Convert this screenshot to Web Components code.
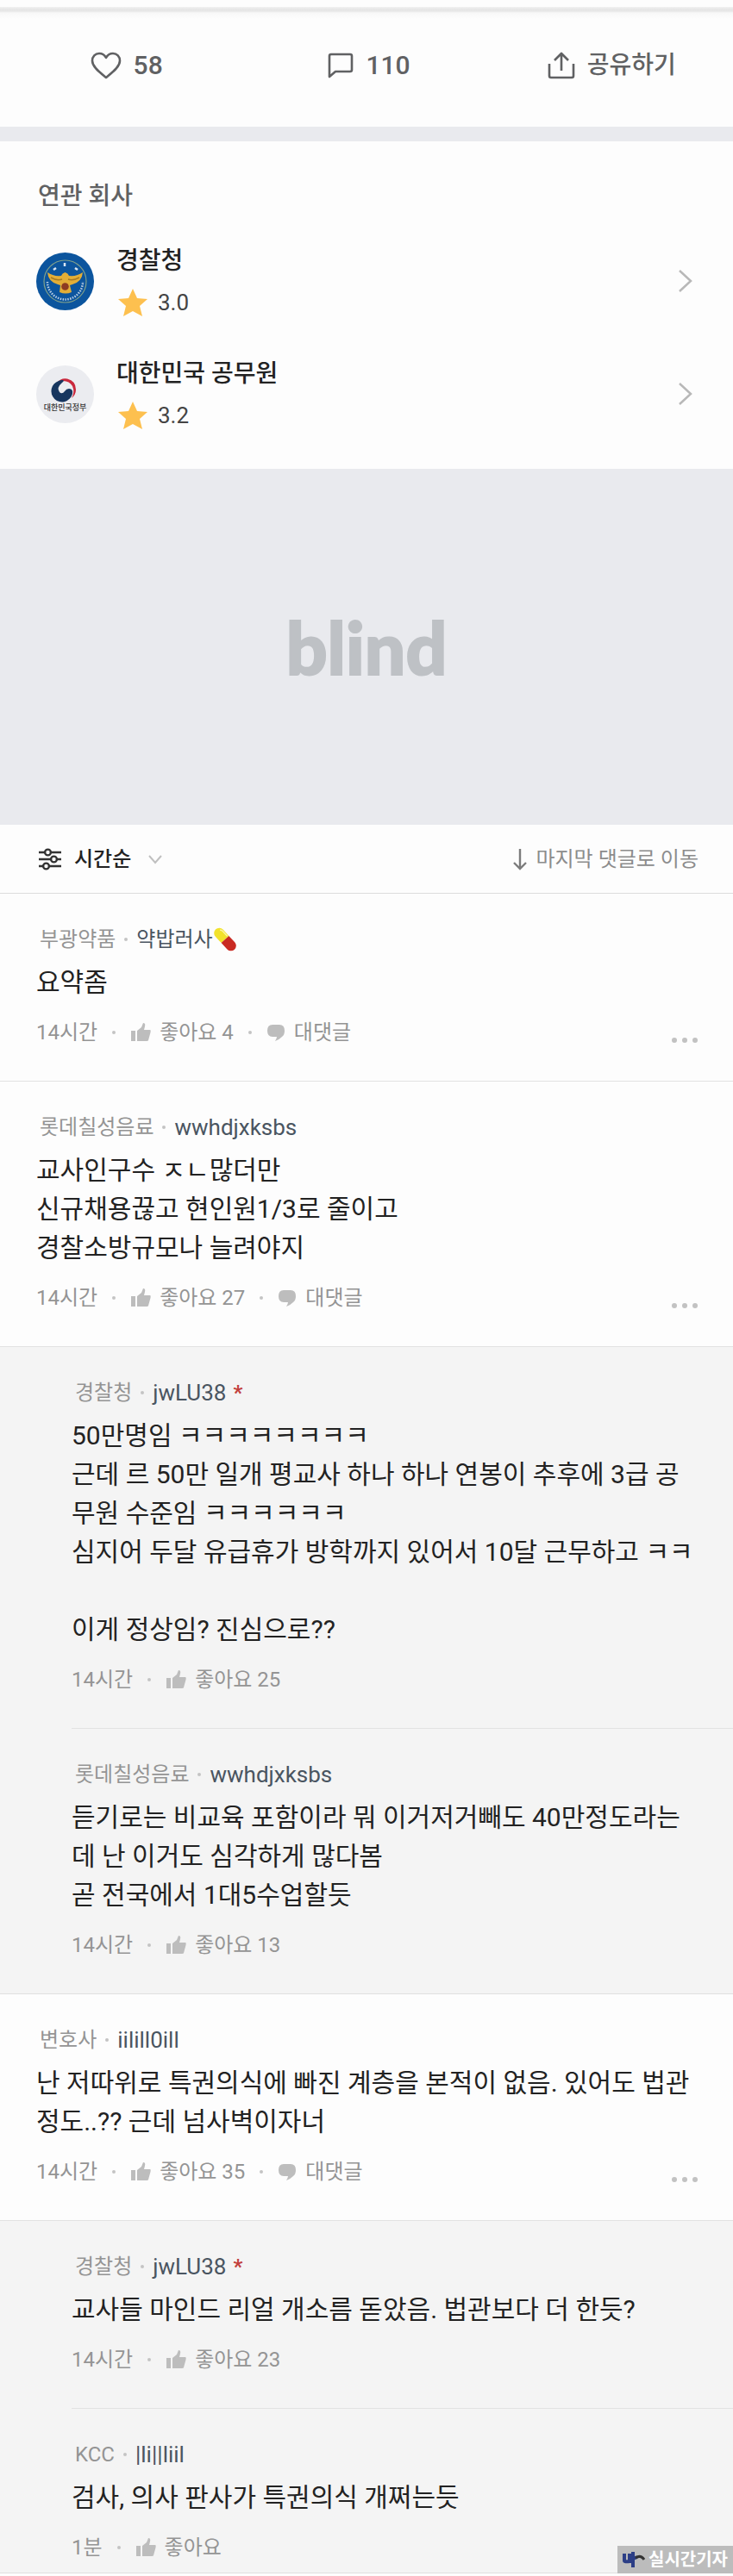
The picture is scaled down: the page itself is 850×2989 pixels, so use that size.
<!DOCTYPE html>
<html lang="ko">
<head>
<meta charset="utf-8">
<meta name="viewport" content="width=device-width, initial-scale=1">
<title>블라인드</title>
<style>
  html { background: #fdfdfd; }
  body { margin: 0; font-family: Roboto, "Noto Sans CJK KR", sans-serif; color: #222; }
</style>
</head>
<body>
<post-page>
  <post-actions>
    <action-button icon="heart" count>58</action-button>
    <action-button icon="comment" count>110</action-button>
    <action-button icon="share">공유하기</action-button>
  </post-actions>
  <related-companies>
    <company-row logo="police" score="3.0">경찰청</company-row>
    <company-row logo="gov" score="3.2">대한민국 공무원</company-row>
  </related-companies>
  <ad-banner>blind</ad-banner>
  <comment-toolbar></comment-toolbar>
  <main>
    <user-comment company="부광약품" name="약밥러사" pill time="14시간" likes="4">요약좀</user-comment>
    <user-comment company="롯데칠성음료" name="wwhdjxksbs" latin time="14시간" likes="27">교사인구수 ㅈㄴ많더만<br>신규채용끊고 현인원1/3로 줄이고<br>경찰소방규모나 늘려야지</user-comment>
    <reply-group>
      <user-comment reply company="경찰청" name="jwLU38" latin writer time="14시간" likes="25">50만명임 ㅋㅋㅋㅋㅋㅋㅋㅋ<br>근데 르 50만 일개 평교사 하나 하나 연봉이 추후에 3급 공무원 수준임 ㅋㅋㅋㅋㅋㅋ<br>심지어 두달 유급휴가 방학까지 있어서 10달 근무하고 ㅋㅋ<br><br>이게 정상임? 진심으로??</user-comment>
      <user-comment reply company="롯데칠성음료" name="wwhdjxksbs" latin time="14시간" likes="13">듣기로는 비교육 포함이라 뭐 이거저거빼도 40만정도라는데 난 이거도 심각하게 많다봄<br>곧 전국에서 1대5수업할듯</user-comment>
    </reply-group>
    <user-comment company="변호사" name="iilill0ill" latin time="14시간" likes="35">난 저따위로 특권의식에 빠진 계층을 본적이 없음. 있어도 법관정도..?? 근데 넘사벽이자너</user-comment>
    <reply-group>
      <user-comment reply company="경찰청" name="jwLU38" latin writer time="14시간" likes="23">교사들 마인드 리얼 개소름 돋았음. 법관보다 더 한듯?</user-comment>
      <user-comment reply last company="KCC" name="|li||liil" latin time="1분">검사, 의사 판사가 특권의식 개쩌는듯</user-comment>
    </reply-group>
  </main>
  <source-mark slot="mark">실시간기자</source-mark>
</post-page>

<script>
const define = (name, render) => customElements.define(name, class extends HTMLElement {
  connectedCallback() {
    if (this.shadowRoot) return;
    this.attachShadow({ mode: 'open' }).innerHTML = render(this);
  }
});

const RESET = `
  button, a { font: inherit; color: inherit; background: none; border: 0; padding: 0; margin: 0; text-decoration: none; cursor: pointer; }
  svg { display: block; flex: none; }`;

const ICONS = {
  heart: `<svg width="36" height="32" viewBox="0 0 36 32" fill="none" stroke="#606163" stroke-width="2.6" stroke-linejoin="round"><path d="M18 30C12 25 2 18 2 10.500C2 5.500 5.500 2 10 2c3.500 0 6.500 2 8 5c1.500-3 4.500-5 8-5c4.500 0 8 3.500 8 8.500C34 18 24 25 18 30Z"/></svg>`,
  comment: `<svg width="30" height="30" viewBox="0 0 30 30" fill="none" stroke="#606163" stroke-width="2.600" stroke-linejoin="round"><path d="M2 28V4Q2 2 4 2H26Q28 2 28 4V20Q28 22 26 22H9Z"/></svg>`,
  share: `<svg width="32" height="32" viewBox="0 0 32 32" fill="none" stroke="#606163" stroke-width="2.600" stroke-linejoin="round"><path d="M2 14V28Q2 30 4 30H28Q30 30 30 28V14M16 22V3M8 10L16 2L24 10"/></svg>`
};

const LOGOS = {
  police: `<svg width="67" height="67" viewBox="0 0 67 67" role="img" aria-label="경찰청 로고">
    <circle cx="33.500" cy="33.500" r="33.500" fill="#0c559e"/>
    <circle cx="33.500" cy="33.500" r="24.500" fill="none" stroke="#7fa08c" stroke-width="1.200"/>
    <path d="M13 34A20.500 20.500 0 0 0 54 34" fill="none" stroke="#b9cee4" stroke-width="2.500" stroke-dasharray="1.500 1.400"/>
    <path d="M20 20l3-2M33 12v4M45 18l3 2" stroke="#dbe7f3" stroke-width="2.500" fill="none"/>
    <path d="M13 23Q20 28 29 27Q30 24 33.500 23Q37 24 38 27Q47 28 54 23Q53 34 42 37L39 38L41 46Q34 49 27 46L28 38L25 37Q14 34 13 23Z" fill="#e3ae37"/>
    <path d="M17 29Q24 33 30 31M50 29Q43 33 37 31" stroke="#a77b24" stroke-width="1.500" fill="none"/>
    <circle cx="33.500" cy="39.500" r="4.300" fill="#8d3b22"/></svg>`,
  gov: `<svg width="67" height="67" viewBox="0 0 67 67" role="img" aria-label="대한민국정부 로고">
    <circle cx="33.500" cy="33.500" r="33.500" fill="#ebecf0"/>
    <path d="M24 20Q29 14 36 15.500Q46 18 46 28Q46 34 41 38Q45 31 42 24Q38 17 29 18Q26 18.500 24 20Z" fill="#c9283c"/>
    <path d="M26 18A12.500 12.500 0 1 0 42 33Q43 27 38 27Q35 27 33 30Q30 34 27 31Q23 26 30 20Q33 18 31 17Q29 16.500 26 18Z" fill="#17365f"/>
    <text x="33.500" y="52" text-anchor="middle" font-family="Noto Sans CJK KR, sans-serif" font-size="9" font-weight="500" fill="#333">대한민국정부</text></svg>`
};

define('post-page', () => `
  <style>:host { display: block; position: relative; overflow: hidden; background: #fdfdfd; }</style>
  <slot></slot><slot name="mark"></slot>`);

define('post-actions', () => `
  <style>
    :host { display: block; border-bottom: 17px solid #e9eaee; }
    .shade { height: 14px; margin-top: 8px; background: linear-gradient(#f2f2f2, #e5e5e5 3px, #e8e8e8 5px, #f8f8f8 7px, #fdfdfd); }
    .row { display: grid; grid-template-columns: repeat(3, 1fr); align-items: center; height: 125px; padding: 0 0 17px 6px; box-sizing: border-box; }
  </style>
  <div class="shade"></div>
  <div class="row"><slot></slot></div>`);

define('action-button', el => `
  <style>${RESET}
    :host { display: flex; justify-content: center; }
    button { display: flex; align-items: center; gap: 14px; font-size: 28px; line-height: 40px; font-weight: 500; color: #606163; }
    :host([count]) button { font-size: 30px; }
  </style>
  <button type="button">${ICONS[el.getAttribute('icon')]}<slot></slot></button>`);

define('related-companies', () => `
  <style>
    :host { display: block; padding: 44px 44px 0; }
    h2 { margin: 0 0 17px; font-size: 28px; line-height: 40px; font-weight: 500; color: #606163; }
    .list { padding-bottom: 17px; }
  </style>
  <h2>연관 회사</h2><div class="list"><slot></slot></div>`);

define('company-row', el => `
  <style>${RESET}
    :host { display: block; margin-left: -2px; height: 131px; }
    a { display: flex; gap: 26px; align-items: center; height: 122px; padding-right: 2px; }
    .info { flex: 1; padding-top: 2px; }
    .name { font-size: 28px; line-height: 40px; font-weight: 500; color: #222; }
    .score { display: flex; align-items: center; gap: 12px; margin-top: 8px; font-size: 26px; line-height: 40px; color: #444; }
  </style>
  <a href="#company">${LOGOS[el.getAttribute('logo')]}
    <div class="info">
      <div class="name"><slot></slot></div>
      <div class="score"><svg width="36" height="34" viewBox="0 0 36 34"><path d="M19 1L24 12L36 13L27 21L30 33L19 27L8 33L11 21L2 13L14 12Z" fill="#fdc04f"/></svg>${el.getAttribute('score')}</div>
    </div>
    <svg width="18" height="28" viewBox="0 0 18 28" fill="none" stroke="#b8b8b8" stroke-width="2.500"><path d="M2 2L15 14L2 26"/></svg>
  </a>`);

define('ad-banner', () => `
  <style>
    :host { display: flex; align-items: center; justify-content: center; height: 413px; background: #e9eaee; color: #bec1c5;
      font-family: Lato, sans-serif; font-weight: 900; font-size: 84px; line-height: 100px; -webkit-text-stroke: 2px #bec1c5; }
  </style><slot></slot>`);

define('comment-toolbar', () => `
  <style>${RESET}
    :host { display: flex; justify-content: space-between; align-items: center; height: 79px; padding: 0 40px 0 44px; border-bottom: 1px solid #dcdcdc; font-size: 24px; line-height: 36px; }
    button, a { display: flex; align-items: center; }
    button { gap: 14px; font-weight: 500; color: #222; }
    a { gap: 9px; color: #8c8c8c; }
    .down { margin-left: 6px; }
  </style>
  <button type="button">
    <svg width="28" height="26" viewBox="0 0 28 26" fill="none" stroke="#333" stroke-width="2.400"><path d="M1 5H8M15 5H27M1 13H15M22 13H27M1 21H6M13 21H27"/><circle cx="11.500" cy="5" r="3.400"/><circle cx="18.500" cy="13" r="3.400"/><circle cx="9.500" cy="21" r="3.400"/></svg>
    시간순
    <svg class="down" width="16" height="12" viewBox="0 0 16 12" fill="none" stroke="#c0c0c0" stroke-width="2"><path d="M1 2L8 10L15 2"/></svg>
  </button>
  <a href="#last">
    <svg width="18" height="26" viewBox="0 0 18 26" fill="none" stroke="#7c7c7c" stroke-width="2.400"><path d="M9 1V24M2 17L9 24L16 17"/></svg>
    마지막 댓글로 이동
  </a>`);

define('reply-group', () => `
  <style>:host { display: block; background: #f4f4f4; padding-left: 83px; border-bottom: 1px solid #dfdfdf; }</style>
  <slot></slot>`);

define('user-comment', el => {
  const a = n => el.getAttribute(n), has = n => el.hasAttribute(n);
  return `
  <style>${RESET}
    :host { display: block; padding: 36px 40px 39px 42px; border-bottom: 1px solid #e2e2e2; }
    :host([reply]) { padding-left: 0; }
    :host([reply]:last-of-type) { border-bottom: 0; }
    :host([last]) { padding-bottom: 12px; }
    .author { display: flex; align-items: center; height: 34px; padding-left: 4px; font-size: 24px; line-height: 34px; color: #949494; }
    .author a { color: #4a5561; }
    :host([latin]) .author a { font-size: 26px; }
    .author b { margin-left: 8px; font-weight: 700; color: #c2403c; }
    .body { margin: 10px 0 19px; font-size: 30px; line-height: 45px; color: #222; word-break: break-all; }
    .meta { display: flex; align-items: center; height: 34px; font-size: 24px; line-height: 34px; color: #949494; }
    .meta button { display: flex; align-items: center; gap: 10px; }
    .meta .re { gap: 8px; }
    i { width: 4px; height: 4px; border-radius: 2px; background: #c4c4c4; }
    .author i { margin: 0 10px; }
    .meta i { margin: 0 17px; }
    .meta .more { margin-left: auto; padding-top: 18px; }
  </style>
  <div class="author">${a('company')}<i></i><a href="#user">${a('name')}</a>${has('writer') ? '<b>*</b>' : ''}${has('pill') ? `
    <svg width="28" height="28" viewBox="0 0 28 28" role="img" aria-label="알약"><g transform="rotate(47 14 14)"><path d="M14 8H4A6 6 0 0 0 4 20H14Z" fill="#f2e22c"/><path d="M14 8H24A6 6 0 0 1 24 20H14Z" fill="#c92a22"/><path d="M2 11Q3 9.500 5 9.500H13" stroke="#fbf6a0" stroke-width="1.500" fill="none"/></g></svg>` : ''}</div>
  <div class="body"><slot></slot></div>
  <div class="meta">${a('time')}<i></i>
    <button type="button"><svg width="24" height="24" viewBox="0 0 24 24" fill="#bdbdbd"><path d="M1 10H6V22H1ZM8 10L13 6L15 1Q18 1 17 5L16 9H23Q24 9 23.500 12L21 21Q21 22 19 22H8Z"/></svg>좋아요${has('likes') ? ' ' + a('likes') : ''}</button>
    ${has('reply') ? '' : `<i></i><button type="button" class="re"><svg width="24" height="24" viewBox="0 0 24 24" fill="#bdbdbd"><path d="M7 3H15Q21 3 21 10Q21 15 18 17Q14 21 10 22Q12 19 12 17H7Q1 17 1 10Q1 3 7 3Z"/></svg>대댓글</button>
    <button type="button" class="more" aria-label="더보기"><svg width="32" height="8" viewBox="0 0 32 8" fill="#c2c2c2"><circle cx="4" cy="4" r="3"/><circle cx="16" cy="4" r="3"/><circle cx="28" cy="4" r="3"/></svg></button>`}
  </div>`;
});

define('source-mark', () => `
  <style>
    :host { position: absolute; right: 0; bottom: 0; display: flex; align-items: center; gap: 4px; height: 32px; padding: 0 6px; box-sizing: border-box; background: #bcbcbc; color: #fff; font-weight: 700; font-size: 20px; line-height: 32px; }
  </style>
  <svg width="26" height="20" viewBox="0 0 26 20" fill="none"><path d="M2 3V11Q2 13 8 12V3M12 1V19M12 9L17 7" stroke="#2c3e86" stroke-width="4"/><path d="M15 8Q21 4 25 10" stroke="#333" stroke-width="3"/></svg>
  <slot></slot>`);
</script>
</body>
</html>
